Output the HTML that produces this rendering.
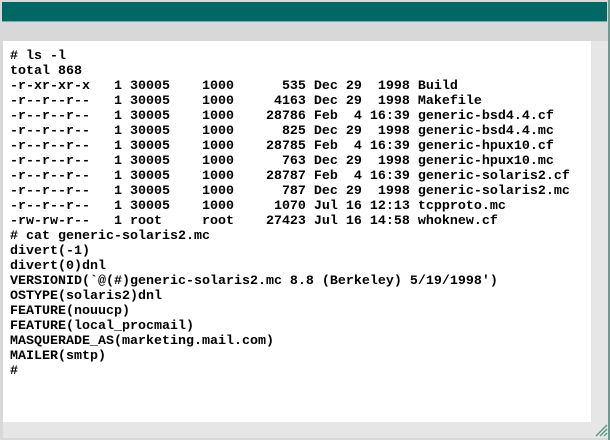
<!DOCTYPE html>
<html><head><style>
html,body{margin:0;padding:0;}
body{width:610px;height:440px;background:#d8d8d8;position:relative;overflow:hidden;}
#teal{position:absolute;left:2px;top:2px;width:605px;height:19px;background:#006864;border-bottom:1px solid #7aa;}
#right{position:absolute;left:608px;top:0;width:2px;height:440px;background:#6f9a90;}
#strip{position:absolute;left:591px;top:41px;width:17px;height:397px;background:#e6e6e6;}
#bottom{position:absolute;left:3px;top:422px;width:605px;height:16px;background:#e6e6e6;}
#white{position:absolute;left:3px;top:41px;width:588px;height:381px;background:#fff;}
pre{position:absolute;left:10px;top:49px;margin:0;font-family:"Liberation Mono",monospace;font-weight:bold;font-size:13.33px;line-height:15px;color:#000;}
#grip{position:absolute;left:595px;top:424px;}
</style></head><body>
<div id="teal"></div>
<div id="strip"></div>
<div id="bottom"></div>
<div id="white"></div>
<div id="right"></div>
<svg id="grip" width="13" height="13" viewBox="0 0 13 13"><path d="M1 12L12 1M5 12L12 5M9 12L12 9" stroke="#4a9a84" stroke-width="1.3"/></svg>
<pre># ls -l
total 868
-r-xr-xr-x   1 30005    1000      535 Dec 29  1998 Build
-r--r--r--   1 30005    1000     4163 Dec 29  1998 Makefile
-r--r--r--   1 30005    1000    28786 Feb  4 16:39 generic-bsd4.4.cf
-r--r--r--   1 30005    1000      825 Dec 29  1998 generic-bsd4.4.mc
-r--r--r--   1 30005    1000    28785 Feb  4 16:39 generic-hpux10.cf
-r--r--r--   1 30005    1000      763 Dec 29  1998 generic-hpux10.mc
-r--r--r--   1 30005    1000    28787 Feb  4 16:39 generic-solaris2.cf
-r--r--r--   1 30005    1000      787 Dec 29  1998 generic-solaris2.mc
-r--r--r--   1 30005    1000     1070 Jul 16 12:13 tcpproto.mc
-rw-rw-r--   1 root     root    27423 Jul 16 14:58 whoknew.cf
# cat generic-solaris2.mc
divert(-1)
divert(0)dnl
VERSIONID(`@(#)generic-solaris2.mc 8.8 (Berkeley) 5/19/1998')
OSTYPE(solaris2)dnl
FEATURE(nouucp)
FEATURE(local_procmail)
MASQUERADE_AS(marketing.mail.com)
MAILER(smtp)
#</pre>
</body></html>
